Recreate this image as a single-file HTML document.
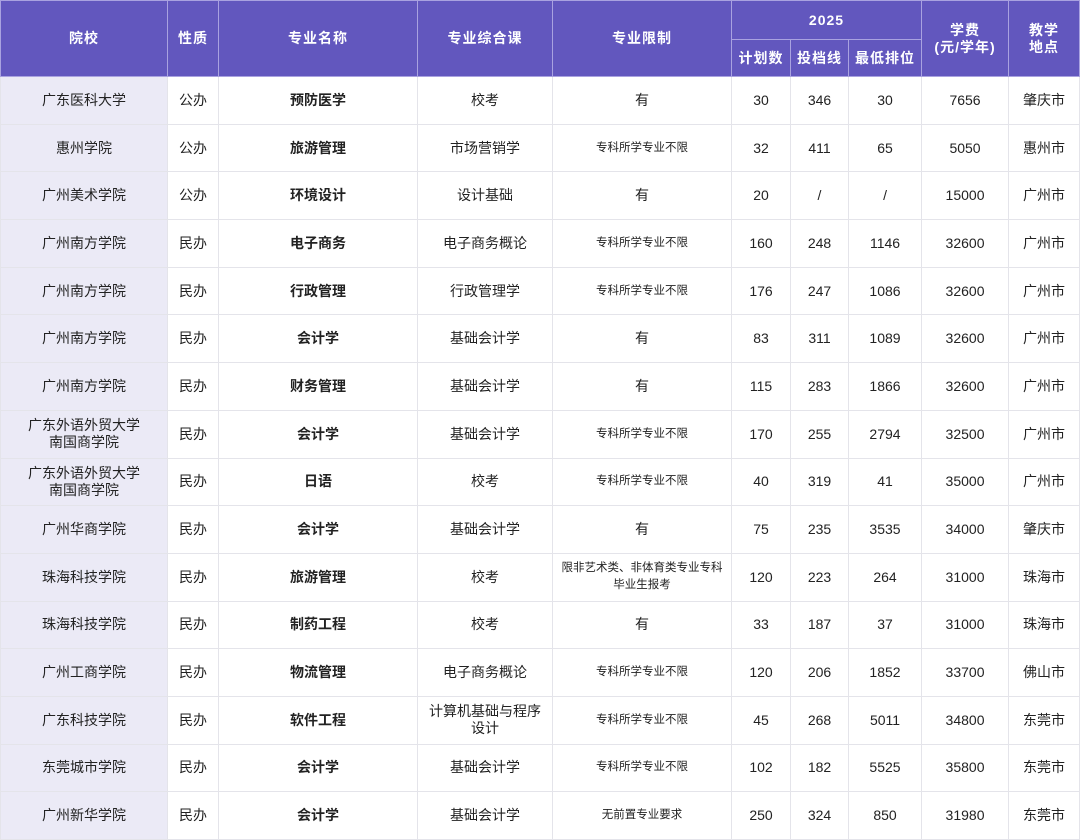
<!DOCTYPE html><html><head><meta charset="utf-8"><style>
body{margin:0;width:1080px;height:840px;overflow:hidden;background:#fff;font-family:"Liberation Sans","Noto Sans CJK SC",sans-serif;}
table{border-collapse:collapse;table-layout:fixed;position:absolute;left:0;top:0;width:1079px;}
td,th{text-align:center;vertical-align:middle;padding:0;font-size:14px;color:#222;border:1px solid #e4e4ea;line-height:17px;}
th{background:#6257be;color:#fff;font-weight:bold;font-size:14px;border:1px solid #a9a2e0;letter-spacing:1px;}
tr.r td{height:46.7px;}
td.s{background:#ebeaf6;}
td.b{font-weight:bold;}
td.m{font-size:11.5px;}
</style></head><body>
<table>
<colgroup><col style="width:167px"><col style="width:51px"><col style="width:199px"><col style="width:135px"><col style="width:179px"><col style="width:59px"><col style="width:58px"><col style="width:73px"><col style="width:87px"><col style="width:71px"></colgroup>
<tr><th rowspan="2" style="height:75px">院校</th><th rowspan="2">性质</th><th rowspan="2">专业名称</th><th rowspan="2">专业综合课</th><th rowspan="2">专业限制</th><th colspan="3" style="height:38px">2025</th><th rowspan="2">学费<br>(元/学年)</th><th rowspan="2">教学<br>地点</th></tr>
<tr><th style="height:36px">计划数</th><th>投档线</th><th>最低排位</th></tr>
<tr class="r"><td class="s">广东医科大学</td><td>公办</td><td class="b">预防医学</td><td>校考</td><td>有</td><td>30</td><td>346</td><td>30</td><td>7656</td><td>肇庆市</td></tr>
<tr class="r"><td class="s">惠州学院</td><td>公办</td><td class="b">旅游管理</td><td>市场营销学</td><td class="m">专科所学专业不限</td><td>32</td><td>411</td><td>65</td><td>5050</td><td>惠州市</td></tr>
<tr class="r"><td class="s">广州美术学院</td><td>公办</td><td class="b">环境设计</td><td>设计基础</td><td>有</td><td>20</td><td>/</td><td>/</td><td>15000</td><td>广州市</td></tr>
<tr class="r"><td class="s">广州南方学院</td><td>民办</td><td class="b">电子商务</td><td>电子商务概论</td><td class="m">专科所学专业不限</td><td>160</td><td>248</td><td>1146</td><td>32600</td><td>广州市</td></tr>
<tr class="r"><td class="s">广州南方学院</td><td>民办</td><td class="b">行政管理</td><td>行政管理学</td><td class="m">专科所学专业不限</td><td>176</td><td>247</td><td>1086</td><td>32600</td><td>广州市</td></tr>
<tr class="r"><td class="s">广州南方学院</td><td>民办</td><td class="b">会计学</td><td>基础会计学</td><td>有</td><td>83</td><td>311</td><td>1089</td><td>32600</td><td>广州市</td></tr>
<tr class="r"><td class="s">广州南方学院</td><td>民办</td><td class="b">财务管理</td><td>基础会计学</td><td>有</td><td>115</td><td>283</td><td>1866</td><td>32600</td><td>广州市</td></tr>
<tr class="r"><td class="s">广东外语外贸大学<br>南国商学院</td><td>民办</td><td class="b">会计学</td><td>基础会计学</td><td class="m">专科所学专业不限</td><td>170</td><td>255</td><td>2794</td><td>32500</td><td>广州市</td></tr>
<tr class="r"><td class="s">广东外语外贸大学<br>南国商学院</td><td>民办</td><td class="b">日语</td><td>校考</td><td class="m">专科所学专业不限</td><td>40</td><td>319</td><td>41</td><td>35000</td><td>广州市</td></tr>
<tr class="r"><td class="s">广州华商学院</td><td>民办</td><td class="b">会计学</td><td>基础会计学</td><td>有</td><td>75</td><td>235</td><td>3535</td><td>34000</td><td>肇庆市</td></tr>
<tr class="r"><td class="s">珠海科技学院</td><td>民办</td><td class="b">旅游管理</td><td>校考</td><td class="m">限非艺术类、非体育类专业专科<br>毕业生报考</td><td>120</td><td>223</td><td>264</td><td>31000</td><td>珠海市</td></tr>
<tr class="r"><td class="s">珠海科技学院</td><td>民办</td><td class="b">制药工程</td><td>校考</td><td>有</td><td>33</td><td>187</td><td>37</td><td>31000</td><td>珠海市</td></tr>
<tr class="r"><td class="s">广州工商学院</td><td>民办</td><td class="b">物流管理</td><td>电子商务概论</td><td class="m">专科所学专业不限</td><td>120</td><td>206</td><td>1852</td><td>33700</td><td>佛山市</td></tr>
<tr class="r"><td class="s">广东科技学院</td><td>民办</td><td class="b">软件工程</td><td>计算机基础与程序<br>设计</td><td class="m">专科所学专业不限</td><td>45</td><td>268</td><td>5011</td><td>34800</td><td>东莞市</td></tr>
<tr class="r"><td class="s">东莞城市学院</td><td>民办</td><td class="b">会计学</td><td>基础会计学</td><td class="m">专科所学专业不限</td><td>102</td><td>182</td><td>5525</td><td>35800</td><td>东莞市</td></tr>
<tr class="r"><td class="s">广州新华学院</td><td>民办</td><td class="b">会计学</td><td>基础会计学</td><td class="m">无前置专业要求</td><td>250</td><td>324</td><td>850</td><td>31980</td><td>东莞市</td></tr>
</table>
</body></html>
